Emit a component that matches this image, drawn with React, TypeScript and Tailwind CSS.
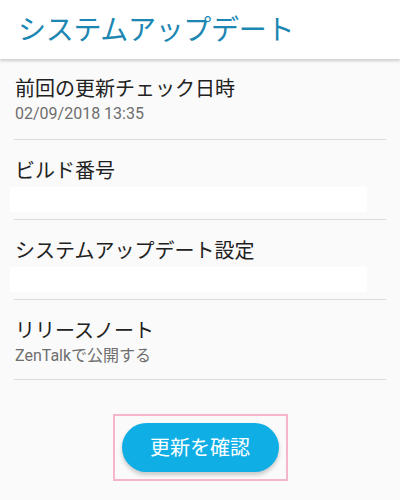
import React from 'react';

const rows = [
  { title: '前回の更新チェック日時', sub: '02/09/2018 13:35', blank: false },
  { title: 'ビルド番号', sub: '', blank: true },
  { title: 'システムアップデート設定', sub: '', blank: true },
  { title: 'リリースノート', sub: 'ZenTalkで公開する', blank: false },
];

export default function App() {
  return (
    <div className="w-[400px] h-[500px] overflow-hidden bg-[#fafafa] font-['Roboto','Noto_Sans_CJK_JP',sans-serif]">
      <header className="relative z-10 h-[59px] bg-white shadow-[0_2px_3px_rgba(0,0,0,0.18)] pl-[18px] pt-[14px]">
        <h1 className="text-[28px] leading-[34px] text-[#1b87b2] tracking-[-0.3px]">システムアップデート</h1>
      </header>
      <ul className="px-[14px]">
        {rows.map((r, i) => (
          <li key={i} className={`border-b border-[#dcdcdc] ${i === 0 ? 'h-[81px] pt-[17px]' : 'h-[80px] pt-[18px]'}`}>
            <div className="pl-px text-[20px] leading-[26px] text-[#212121]">{r.title}</div>
            {r.blank ? (
              <div className="-ml-[4px] mt-[3px] h-[25px] w-[357px] bg-white" />
            ) : (
              <div className="mt-[2px] pl-px text-[16px] leading-[20px] text-[#6e6e6e]">{r.sub}</div>
            )}
          </li>
        ))}
      </ul>
      <div className="flex justify-center pt-[34px]">
        <div className="border-2 border-[#f5b5cd] p-[7px]">
          <button className="h-[49px] w-[157px] rounded-full bg-[#0fafe6] text-[20px] text-white shadow-[0_3px_4px_rgba(0,0,0,0.2)]">
            更新を確認
          </button>
        </div>
      </div>
    </div>
  );
}
